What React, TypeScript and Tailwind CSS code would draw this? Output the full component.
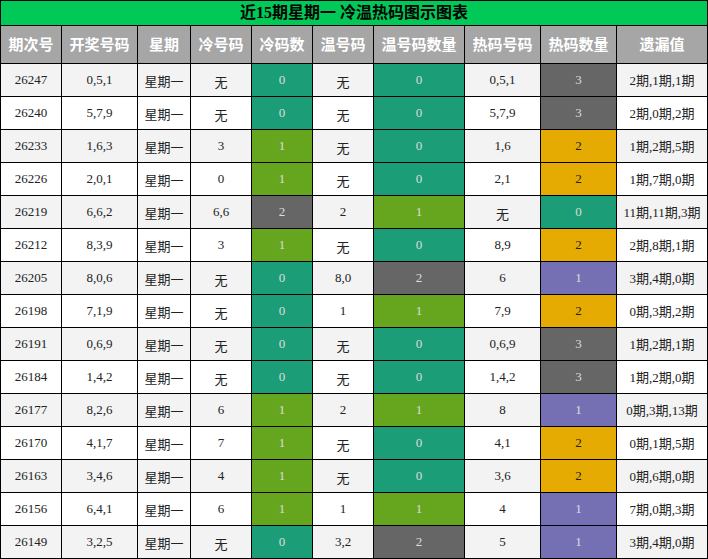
const TEAL = 'bg-[#1b9e77] text-[#dcdcdc]';
const GREEN = 'bg-[#66a61e] text-[#dcdcdc]';
const GRAY = 'bg-[#666666] text-[#dcdcdc]';
const YELLOW = 'bg-[#e6ab02] text-[#222222]';
const PURPLE = 'bg-[#7570b3] text-[#dcdcdc]';

const countColor = (n: number) => (n === 0 ? TEAL : n === 1 ? GREEN : GRAY);
const hotColor = (n: number) => (n === 0 ? TEAL : n === 1 ? PURPLE : n === 2 ? YELLOW : GRAY);

type Row = [string, string, string, number, string, number, string, number, string];

const rows: Row[] = [
  ['26247', '0,5,1', '无', 0, '无', 0, '0,5,1', 3, '2期,1期,1期'],
  ['26240', '5,7,9', '无', 0, '无', 0, '5,7,9', 3, '2期,0期,2期'],
  ['26233', '1,6,3', '3', 1, '无', 0, '1,6', 2, '1期,2期,5期'],
  ['26226', '2,0,1', '0', 1, '无', 0, '2,1', 2, '1期,7期,0期'],
  ['26219', '6,6,2', '6,6', 2, '2', 1, '无', 0, '11期,11期,3期'],
  ['26212', '8,3,9', '3', 1, '无', 0, '8,9', 2, '2期,8期,1期'],
  ['26205', '8,0,6', '无', 0, '8,0', 2, '6', 1, '3期,4期,0期'],
  ['26198', '7,1,9', '无', 0, '1', 1, '7,9', 2, '0期,3期,2期'],
  ['26191', '0,6,9', '无', 0, '无', 0, '0,6,9', 3, '1期,2期,1期'],
  ['26184', '1,4,2', '无', 0, '无', 0, '1,4,2', 3, '1期,2期,0期'],
  ['26177', '8,2,6', '6', 1, '2', 1, '8', 1, '0期,3期,13期'],
  ['26170', '4,1,7', '7', 1, '无', 0, '4,1', 2, '0期,1期,5期'],
  ['26163', '3,4,6', '4', 1, '无', 0, '3,6', 2, '0期,6期,0期'],
  ['26156', '6,4,1', '6', 1, '1', 1, '4', 1, '7期,0期,3期'],
  ['26149', '3,2,5', '无', 0, '3,2', 2, '5', 1, '3期,4期,0期'],
];

const headers = ['期次号', '开奖号码', '星期', '冷号码', '冷码数', '温号码', '温号码数量', '热码号码', '热码数量', '遗漏值'];

function Cell({ children, cls }: { children: React.ReactNode; cls: string }) {
  return <div className={`h-[32px] flex items-center justify-center whitespace-nowrap ${cls}`}>{children}</div>;
}

// "无" sits a little lower than the digits in the reference
const nil = (v: string) => (v === '无' ? 'pt-[6px]' : '');

export default function App() {
  return (
    <div className="w-[708px] h-[559px] bg-white">
      <div className="grid grid-cols-[60px_75px_52px_60px_60px_60px_90px_75px_75px_90px] gap-px bg-black p-px font-['Liberation_Serif','Noto_Sans_CJK_SC',serif] text-[13px] text-[#222222]">
        <div className="col-span-10 h-[24px] bg-[#00c957] flex items-center justify-center font-bold text-[16px] text-black">
          近15期星期一 冷温热码图示图表
        </div>
        {headers.map((h) => (
          <div key={h} className="h-[37px] bg-[#a6a6a6] flex items-center justify-center font-bold text-[15px] text-white font-['Noto_Sans_CJK_SC',sans-serif]">
            {h}
          </div>
        ))}
        {rows.map((r, i) => {
          const bg = i % 2 === 0 ? 'bg-[#f3f3f3]' : 'bg-white';
          return [
            <Cell key={`${i}a`} cls={bg}>{r[0]}</Cell>,
            <Cell key={`${i}b`} cls={bg}>{r[1]}</Cell>,
            <Cell key={`${i}c`} cls={`${bg} pt-[3px]`}>星期一</Cell>,
            <Cell key={`${i}d`} cls={`${bg} ${nil(r[2])}`}>{r[2]}</Cell>,
            <Cell key={`${i}e`} cls={countColor(r[3])}>{r[3]}</Cell>,
            <Cell key={`${i}f`} cls={`${bg} ${nil(r[4])}`}>{r[4]}</Cell>,
            <Cell key={`${i}g`} cls={countColor(r[5])}>{r[5]}</Cell>,
            <Cell key={`${i}h`} cls={`${bg} ${nil(r[6])}`}>{r[6]}</Cell>,
            <Cell key={`${i}i`} cls={hotColor(r[7])}>{r[7]}</Cell>,
            <Cell key={`${i}j`} cls={`${bg} pt-[2px]`}>{r[8]}</Cell>,
          ];
        })}
      </div>
    </div>
  );
}
